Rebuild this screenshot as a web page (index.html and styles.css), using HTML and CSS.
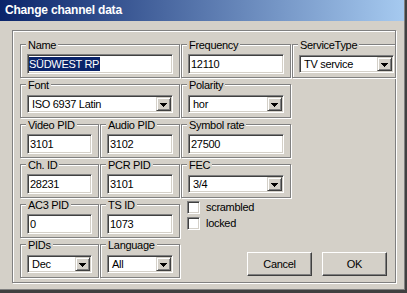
FILE: index.html
```html
<!DOCTYPE html>
<html>
  <head>
    <meta charset="utf-8">
    <link rel="stylesheet" href="styles.css">
    <title>Change channel data</title>
  </head>
  <body>
    <div class="win">
      <div class="title">Change channel data</div>
      <div class="panel">
        <div class="grid">
          <div class="grp c1 span2"><span class="cap">Name</span><div class="edit"><span class="sel">SÜDWEST RP</span></div></div>
          <div class="grp"><span class="cap">Frequency</span><div class="edit">12110</div></div>
          <div class="grp"><span class="cap">ServiceType</span>
            <div class="combo wide"><span class="val">TV service</span><span class="btn"><svg width="7" height="4" viewBox="0 0 7 4"><path d="M0 0h7v1H0zM1 1h5v1H1zM2 2h3v1H2zM3 3h1v1H3z"/></svg></span></div>
          </div>

          <div class="grp c1 span2"><span class="cap">Font</span>
            <div class="combo"><span class="val">ISO 6937 Latin</span><span class="btn"><svg width="7" height="4" viewBox="0 0 7 4"><path d="M0 0h7v1H0zM1 1h5v1H1zM2 2h3v1H2zM3 3h1v1H3z"/></svg></span></div>
          </div>
          <div class="grp"><span class="cap">Polarity</span>
            <div class="combo"><span class="val">hor</span><span class="btn"><svg width="7" height="4" viewBox="0 0 7 4"><path d="M0 0h7v1H0zM1 1h5v1H1zM2 2h3v1H2zM3 3h1v1H3z"/></svg></span></div>
          </div>

          <div class="grp c1"><span class="cap">Video PID</span><div class="edit">3101</div></div>
          <div class="grp"><span class="cap">Audio PID</span><div class="edit">3102</div></div>
          <div class="grp"><span class="cap">Symbol rate</span><div class="edit">27500</div></div>

          <div class="grp c1"><span class="cap">Ch. ID</span><div class="edit">28231</div></div>
          <div class="grp"><span class="cap">PCR PID</span><div class="edit">3101</div></div>
          <div class="grp"><span class="cap">FEC</span>
            <div class="combo"><span class="val">3/4</span><span class="btn"><svg width="7" height="4" viewBox="0 0 7 4"><path d="M0 0h7v1H0zM1 1h5v1H1zM2 2h3v1H2zM3 3h1v1H3z"/></svg></span></div>
          </div>

          <div class="grp c1"><span class="cap">AC3 PID</span><div class="edit">0</div></div>
          <div class="grp"><span class="cap">TS ID</span><div class="edit">1073</div></div>
          <div class="checks">
            <div class="chk"><span class="box"></span>scrambled</div>
            <div class="chk"><span class="box"></span>locked</div>
          </div>

          <div class="grp c1"><span class="cap">PIDs</span>
            <div class="combo"><span class="val">Dec</span><span class="btn"><svg width="7" height="4" viewBox="0 0 7 4"><path d="M0 0h7v1H0zM1 1h5v1H1zM2 2h3v1H2zM3 3h1v1H3z"/></svg></span></div>
          </div>
          <div class="grp"><span class="cap">Language</span>
            <div class="combo"><span class="val">All</span><span class="btn"><svg width="7" height="4" viewBox="0 0 7 4"><path d="M0 0h7v1H0zM1 1h5v1H1zM2 2h3v1H2zM3 3h1v1H3z"/></svg></span></div>
          </div>
          <div class="buttons">
            <div class="button">Cancel</div>
            <div class="button">OK</div>
          </div>
        </div>
      </div>
    </div>
  </body>
</html>
```

FILE: styles.css
```css
html, body { margin: 0; padding: 0; background: #d4d0c8; }
body {
    font-family: 'Liberation Sans', Arial, sans-serif; font-size: 11px;
    letter-spacing: -0.3px; color: #000;
}
.win {
    width: 407px; height: 293px; box-sizing: border-box;
    background: #d4d0c8; overflow: hidden;
    border-right: 2px solid #404040; border-bottom: 3px solid #404040;
    box-shadow: inset -1px -1px 0 #808080;
}
.title {
    height: 21px; margin-right: 1px; box-sizing: border-box;
    padding: 3px 0 0 5px; line-height: 15px;
    background: linear-gradient(to right, #0a246a, #a6caf0);
    color: #fff; font-weight: bold; font-size: 12px; letter-spacing: -0.2px;
}
.panel {
    margin: 9px 0 0 12px; width: 384px; height: 253px; box-sizing: border-box;
    border: 1px solid #808080;
    box-shadow: 1px 1px 0 #fff, inset 1px 1px 0 #fff;
    padding: 13px 0 0 7px;
}
.grid {
    display: grid; width: 376px;
    grid-template-columns: 79px 80px 110px 104px;
    grid-auto-rows: 34px; column-gap: 1px; row-gap: 6px;
}
.c1 { grid-column-start: 1; }
.span2 { grid-column-end: span 2; }
.grp {
    box-sizing: border-box; border: 1px solid #808080;
    box-shadow: 1px 1px 0 #fff, inset 1px 1px 0 #fff;
}
.cap {
    display: table; margin: -6px 0 0 5px; padding: 0 2px;
    line-height: 13px; background: #d4d0c8; white-space: nowrap;
}
/* sunken 3d edge shared by edits, combos and checkboxes */
.edit, .combo, .box {
    box-sizing: border-box; background: #fff;
    border: 1px solid; border-color: #808080 #fff #fff #808080;
    box-shadow: inset 1px 1px 0 #404040, inset -1px -1px 0 #d4d0c8;
}
.edit {
    margin: 2px 6px 0; height: 20px;
    padding-left: 2px; line-height: 18px; white-space: nowrap;
}
.sel {
    display: inline-block; background: #0a246a; color: #fff;
    line-height: 14px; padding: 0 1px 0 0; margin-left: -1px;
}
.combo { margin: 3px 6px 0; height: 18px; display: flex; padding: 1px; }
.combo.wide { margin-right: 1px; }
.val { flex: 1; line-height: 14px; padding-left: 3px; white-space: nowrap; }
.btn {
    width: 15px; height: 14px; box-sizing: border-box; background: #d4d0c8;
    border: 1px solid; border-color: #d4d0c8 #404040 #404040 #d4d0c8;
    box-shadow: inset 1px 1px 0 #fff, inset -1px -1px 0 #808080;
    display: flex; align-items: center; justify-content: center;
}
.btn svg { display: block; shape-rendering: crispEdges; margin-top: 1px; }
.checks { margin: -3px 0 0 6px; display: flex; flex-direction: column; gap: 3px; }
.chk { display: flex; align-items: center; line-height: 13px; }
.box { width: 13px; height: 13px; margin-right: 6px; }
.buttons {
    grid-column: 3 / span 2; display: flex; justify-content: flex-end;
    gap: 10px; padding: 8px 9px 0 0;
}
.button {
    width: 65px; height: 24px; box-sizing: border-box; text-align: center;
    line-height: 22px; background: #d4d0c8;
    border: 1px solid; border-color: #fff #404040 #404040 #fff;
    box-shadow: inset -1px -1px 0 #808080;
}
```
